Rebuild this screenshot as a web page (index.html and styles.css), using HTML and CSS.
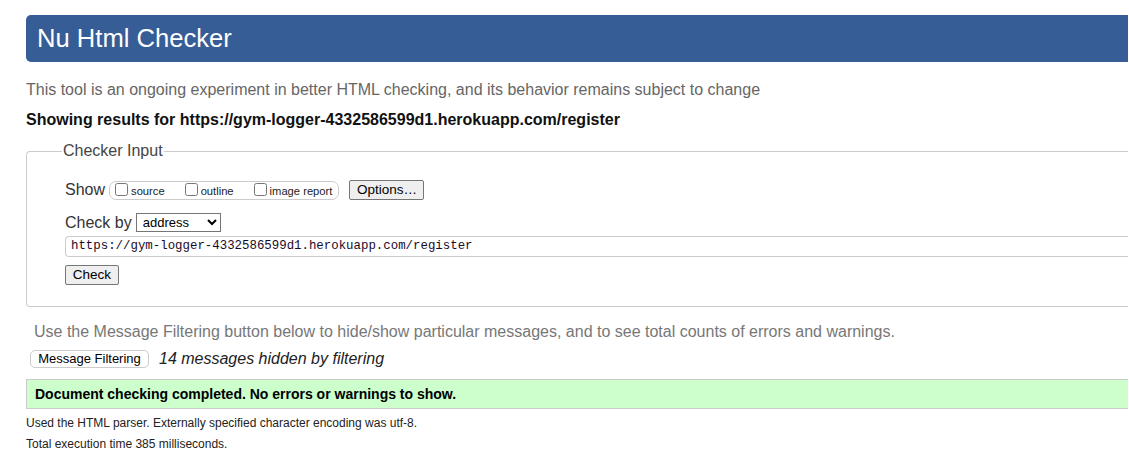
FILE: index.html
```html
<!DOCTYPE html>
<html>
<head>
<meta charset="utf-8">
<link rel="stylesheet" href="styles.css">
</head>
<body>
<main class="page">
  <h1 class="title">Nu Html Checker</h1>
  <p class="intro">This tool is an ongoing experiment in better HTML checking, and its behavior remains subject to change</p>
  <p class="showing">Showing results for https://gym-logger-4332586599d1.herokuapp.com/register</p>
  <fieldset class="checker">
    <legend class="legend">Checker Input</legend>
    <div class="row show-row">
      <span class="label">Show</span>
      <span class="opts">
        <label class="opt"><input type="checkbox" class="cb">source</label>
        <label class="opt"><input type="checkbox" class="cb">outline</label>
        <label class="opt"><input type="checkbox" class="cb">image report</label>
      </span>
      <button class="btn options-btn">Options…</button>
    </div>
    <div class="row by-row">
      <span class="label">Check by</span>
      <select class="sel"><option>address</option></select>
    </div>
    <div class="url">https://gym-logger-4332586599d1.herokuapp.com/register</div>
    <button class="btn check-btn">Check</button>
  </fieldset>
  <p class="filter-note">Use the Message Filtering button below to hide/show particular messages, and to see total counts of errors and warnings.</p>
  <div class="filter-row">
    <button class="btn filter-btn">Message Filtering</button>
    <em class="hidden-note">14 messages hidden by filtering</em>
  </div>
  <div class="success">Document checking completed. No errors or warnings to show.</div>
  <p class="meta">Used the HTML parser. Externally specified character encoding was utf-8.</p>
  <p class="meta">Total execution time 385 milliseconds.</p>
</main>
</body>
</html>
```
FILE: styles.css
```css
html, body {
  margin: 0;
  padding: 0;
  overflow: hidden;
  background: #fff;
}
body {
  font-family: "Liberation Sans", Arial, sans-serif;
  color: #111;
}
.page {
  margin-left: 26px;
  width: 1102px;
  padding-top: 15px;
}
.title {
  margin: 0;
  height: 47px;
  box-sizing: border-box;
  background: #365d95;
  color: #fff;
  font-weight: normal;
  font-size: 25.6px;
  line-height: 47px;
  padding-left: 11px;
  border-radius: 5px 0 0 5px;
}
.intro {
  margin: 19px 0 0;
  font-size: 16px;
  line-height: 18px;
  color: #666;
}
.showing {
  margin: 12px 0 0;
  font-size: 16px;
  line-height: 18px;
  font-weight: bold;
  color: #111;
}
.checker {
  margin: 13px 0 0;
  border: 1px solid #ccc;
  border-right: none;
  border-radius: 4px 0 0 4px;
  padding: 19px 0 21px 38px;
}
.legend {
  font-size: 16px;
  color: #444;
  padding: 0 1px;
  margin-left: -3px;
  line-height: 18px;
}
.row {
  display: flex;
  align-items: center;
}
.label {
  font-size: 16px;
  color: #333;
  line-height: 18px;
}
.show-row {
  margin-top: 1px;
  height: 20px;
}
.opts {
  margin-left: 4px;
  display: flex;
  align-items: center;
  height: 17px;
  border: 1px solid #ccc;
  border-radius: 7px;
  padding: 0 6px 0 5px;
  margin-top: 1px;
}
.opt {
  display: flex;
  align-items: center;
  font-size: 11.2px;
  color: #222;
  margin-right: 20px;
}
.opt:last-child {
  margin-right: 0;
}
.cb {
  width: 13px;
  height: 13px;
  margin: 0 3px 2px 0;
}
.btn {
  font-family: "Liberation Sans", Arial, sans-serif;
  font-size: 13px;
  color: #000;
  background: #efefef;
  border: 1px solid #767676;
  border-radius: 2px;
  padding: 0 6px;
  height: 20px;
  line-height: 18px;
}
.options-btn {
  margin-left: 10px;
  width: 75px;
  font-size: 13.5px;
}
.by-row {
  margin-top: 13px;
  height: 19px;
}
.sel {
  margin-left: 4px;
  width: 85px;
  height: 19px;
  font-family: "Liberation Sans", Arial, sans-serif;
  font-size: 13px;
  border: 1px solid #767676;
  border-radius: 0;
  background: #fff;
  color: #000;
  padding: 0 0 0 2px;
}
.url {
  margin-top: 4px;
  height: 21px;
  box-sizing: border-box;
  border: 1px solid #ccc;
  border-right: none;
  border-radius: 4px 0 0 4px;
  font-family: "Liberation Mono", "Courier New", monospace;
  font-size: 12.4px;
  line-height: 19px;
  padding-left: 5px;
  color: #1a0a2a;
}
.check-btn {
  margin-top: 8px;
  width: 54px;
  display: block;
  font-size: 13.5px;
}
.filter-note {
  margin: 16px 0 0 8px;
  font-size: 16px;
  line-height: 18px;
  color: #777;
}
.filter-row {
  margin-top: 9px;
  display: flex;
  align-items: center;
  padding-left: 4px;
}
.filter-btn {
  background: #fff;
  border: 1px solid #ccc;
  border-radius: 5px;
  height: 18px;
  line-height: 16px;
  font-size: 13px;
  width: 119px;
  padding: 0;
}
.hidden-note {
  margin-left: 10px;
  font-size: 16px;
  line-height: 18px;
  color: #222;
}
.success {
  margin-top: 11px;
  height: 30px;
  box-sizing: border-box;
  background: #ccffcc;
  border: 1px solid #ccc;
  border-right: none;
  font-weight: bold;
  font-size: 14px;
  line-height: 28px;
  padding-left: 8px;
  color: #000;
}
.meta {
  margin: 7px 0 0;
  font-size: 12px;
  line-height: 14px;
  color: #222;
}
.meta + .meta {
  margin-top: 7px;
}
```
